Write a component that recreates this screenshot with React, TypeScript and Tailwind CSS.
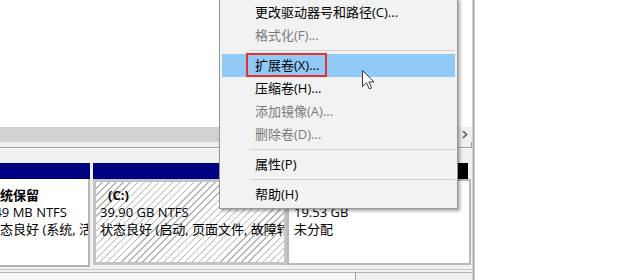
import React from "react";

type Item = { label: string; disabled?: boolean; active?: boolean } | "sep";

const items: Item[] = [
  { label: "更改驱动器号和路径(C)..." },
  { label: "格式化(F)...", disabled: true },
  "sep",
  { label: "扩展卷(X)...", active: true },
  { label: "压缩卷(H)..." },
  { label: "添加镜像(A)...", disabled: true },
  { label: "删除卷(D)...", disabled: true },
  "sep",
  { label: "属性(P)" },
  "sep",
  { label: "帮助(H)" },
];

function Menu() {
  return (
    <div className="absolute left-[219px] top-[-2px] w-[239px] bg-[#f2f2f2] border border-[#979797] p-[2px] shadow-[2px_2px_3px_rgba(0,0,0,0.35)]">
      {items.map((it, i) =>
        it === "sep" ? (
          <div key={i} className="h-[7px] flex items-center">
            <div className="h-px flex-1 ml-[28px] bg-[#d2d2d2]" />
          </div>
        ) : (
          <div
            key={i}
            className={
              "relative h-[23px] flex items-center pl-[33px] whitespace-nowrap " +
              (it.active ? "bg-[#91c9f7] " : "") +
              (it.disabled ? "text-[#7a7a7a]" : "text-black")
            }
          >
            {it.label}
            {it.active && (
              <div className="absolute left-[24px] top-[-1px] w-[81px] h-[24px] border-2 border-[#e8302f]" />
            )}
          </div>
        )
      )}
    </div>
  );
}

export default function App() {
  return (
    <div className="relative w-[640px] h-[280px] overflow-hidden bg-white flex text-[13px] leading-[17px] text-black font-['Open_Sans','Noto_Sans_CJK_SC',sans-serif]">
      <div className="w-[472px] h-full flex flex-col bg-[#f0f0f0]">
        <div className="h-[127px] bg-white" />
        <div className="h-[15px] flex">
          <div className="flex-1 bg-[#d2d2d2]" />
          <div className="w-[15px] bg-[#f0f0f0] flex items-center justify-center">
            <svg width="6" height="9" viewBox="0 0 6 9">
              <path d="M1 1 L4.5 4.5 L1 8" fill="none" stroke="#606060" strokeWidth="1.6" />
            </svg>
          </div>
        </div>
        <div className="h-[5px] flex">
          <div className="flex-1" />
          <div className="w-px bg-[#a0a0a0]" />
        </div>
        <div className="h-px bg-[#a0a0a0]" />
        <div className="h-[15px] border-t border-white" />
        <div className="h-[104px] flex ml-[-20px]">
          <div className="w-[110px] flex flex-col">
            <div className="h-[16px] bg-[#000080]" />
            <div className="flex-1 bg-white border-r-2 border-b-2 border-[#b4b4b4] pl-[7px] pt-[8px] overflow-hidden whitespace-nowrap">
              <div className="font-bold">系统保留</div>
              <div>549 MB NTFS</div>
              <div>状态良好 (系统, 活动, 主分区)</div>
            </div>
          </div>
          <div className="w-[3px]" />
          <div className="w-[194px] flex flex-col">
            <div className="h-[16px] bg-[#000080]" />
            <div className="flex-1 mb-[2px] border-[3px] border-[#c4c4c4] bg-[repeating-linear-gradient(135deg,#ffffff_0px,#ffffff_4px,#b4b4b4_4px,#b4b4b4_5px)] pl-[4px] pt-[5px] overflow-hidden whitespace-nowrap">
              <div className="font-bold pl-[8px]">(C:)</div>
              <div>39.90 GB NTFS</div>
              <div>状态良好 (启动, 页面文件, 故障转储, 主分区)</div>
            </div>
          </div>
          <div className="w-[184px] flex flex-col">
            <div className="h-[16px] bg-black mr-[3px] ml-px" />
            <div className="flex-1 mb-[2px] bg-white border-2 border-[#b8b8b8] pl-[5px] pt-[6px] overflow-hidden whitespace-nowrap">
              <div>&nbsp;</div>
              <div>19.53 GB</div>
              <div>未分配</div>
            </div>
          </div>
        </div>
        <div className="h-[13px] flex flex-col">
          <div className="h-px bg-[#c8c8c8] mt-[2px]" />
          <div className="flex-1 flex mt-[2px] border-t border-[#b0b0b0]">
            <div className="w-[356px] bg-[#f7f7f7] border-r border-[#a0a0a0]" />
            <div className="flex-1" />
          </div>
        </div>
      </div>
      <div className="w-[3px] h-full bg-[#a8a8a8] border-x border-[#d0d0d0]" />
      <div className="flex-1 bg-white" />

      <Menu />

      <svg className="absolute left-[362px] top-[70px]" width="13" height="20" viewBox="0 0 13 20">
        <path
          d="M0.5 0.5 L0.5 16.5 L4.5 12.8 L7.3 19 L9.6 18 L6.9 11.9 L12 11.9 Z"
          fill="#ffffff"
          stroke="#3a3a3a"
          strokeWidth="1"
          strokeLinejoin="round"
        />
      </svg>
    </div>
  );
}
